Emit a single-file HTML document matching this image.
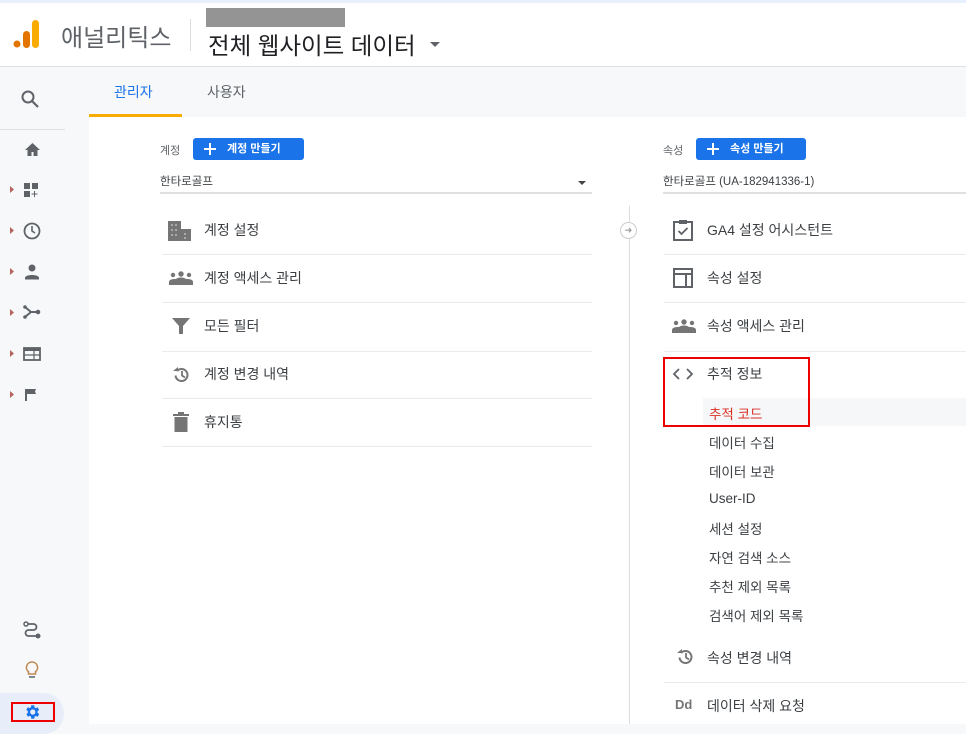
<!DOCTYPE html><html><head><meta charset="utf-8"><style>
*{margin:0;padding:0;box-sizing:border-box}
body{width:966px;height:734px;overflow:hidden;background:#f7f8fa;font-family:"Liberation Sans","Noto Sans CJK KR",sans-serif;color:#3c4043;position:relative}
.a{position:absolute}
.hdr{left:0;top:0;width:966px;height:67px;background:#fff;border-top:3px solid #e8f0fe;border-bottom:1px solid #e0e0e0}
.t{position:absolute;white-space:nowrap}
.item{position:absolute;font-size:14px;color:#3c4043;white-space:nowrap}
.line{position:absolute;height:1px;background:#ebebeb}
.btn{position:absolute;background:#1a73e8;color:#fff;border-radius:3px;font-size:11px;font-weight:bold;height:22px;line-height:22px}
.sub{position:absolute;left:709px;font-size:13.5px;color:#3c4043;white-space:nowrap}
</style></head><body>
<div class="a hdr"></div>
<svg class="a" style="left:12px;top:18px" width="28" height="32"><circle cx="5" cy="26" r="3.5" fill="#e37400"/><rect x="11" y="13" width="7" height="17" rx="3.5" fill="#e37400"/><rect x="20" y="2" width="7" height="28" rx="3.5" fill="#f9ab00"/></svg>
<div class="t" style="left:61px;top:18px;font-size:24px;color:#5f6368">애널리틱스</div>
<div class="a" style="left:190px;top:19px;width:1px;height:32px;background:#dadce0"></div>
<div class="a" style="left:206px;top:8px;width:139px;height:19px;background:#949494"></div>
<div class="t" style="left:208px;top:27px;font-size:23.5px;color:#202124">전체 웹사이트 데이터</div>
<div class="a" style="left:430px;top:42px;border:5px solid transparent;border-top:5px solid #5f6368"></div>
<!-- sidebar -->
<div class="a" style="left:0;top:68px;width:65px;height:666px;background:#f7f8fa"></div>
<svg class="a" style="left:20px;top:89px" width="20" height="20"><circle cx="8" cy="8" r="5.5" fill="none" stroke="#5f6368" stroke-width="2"/><path d="M12 12l6 6" stroke="#5f6368" stroke-width="2.2"/></svg>
<div class="a" style="left:0;top:129px;width:65px;height:1px;background:#e0e0e0"></div>
<svg class="a" style="left:24px;top:142px" width="17" height="15"><path d="M8.5 1L1 8h2.5v6h4v-4h2v4h4V8H16z" fill="#5f6368"/></svg>
<svg class="a" style="left:0;top:180px" width="45" height="230" fill="#5f6368">
<g fill="#b5655d"><path d="M10 6l4 3.5-4 3.5z"/><path d="M10 47l4 3.5-4 3.5z"/><path d="M10 88l4 3.5-4 3.5z"/><path d="M10 129l4 3.5-4 3.5z"/><path d="M10 170l4 3.5-4 3.5z"/><path d="M10 211l4 3.5-4 3.5z"/></g>
<rect x="24" y="3" width="6" height="6"/><rect x="32" y="3" width="6" height="6"/><rect x="24" y="11" width="6" height="6"/><path d="M34 11h1v2.5h2.5v1H35V17h-1v-2.5h-2.5v-1H34z"/>
<circle cx="32" cy="51" r="7.5" fill="none" stroke="#5f6368" stroke-width="1.8"/><path d="M32 46v5l3 2" fill="none" stroke="#5f6368" stroke-width="1.6"/>
<circle cx="32" cy="88" r="3.5"/><path d="M25 98c0-4 14-4 14 0v1.5H25z"/>
<path d="M25 127l6 5-6 5M31 132h7" fill="none" stroke="#5f6368" stroke-width="2"/><circle cx="38" cy="132" r="2.3"/><circle cx="25" cy="127" r="1.8"/><circle cx="25" cy="137" r="1.8"/>
<rect x="24" y="168" width="16" height="12" fill="none" stroke="#5f6368" stroke-width="1.8"/><rect x="24" y="168" width="16" height="3"/><path d="M24 175h16M34 171v9" stroke="#5f6368" stroke-width="1.2"/>
<path d="M25 209h11l-1 2.5 1 2.5h-9v7h-2z"/>
</svg>
<svg class="a" style="left:22px;top:620px" width="20" height="20"><circle cx="4" cy="4" r="2" fill="none" stroke="#5f6368" stroke-width="1.5"/><path d="M5.5 4h6a3 3 0 010 6h-5a3 3 0 000 6h8" fill="none" stroke="#5f6368" stroke-width="1.8"/><circle cx="16" cy="16" r="2.5" fill="#5f6368"/></svg>
<svg class="a" style="left:24px;top:660px" width="16" height="20"><path d="M8 2a5.5 5.5 0 00-3.5 9.8V14h7v-2.2A5.5 5.5 0 008 2z" fill="none" stroke="#c08a55" stroke-width="1.6"/><path d="M5 17h6" stroke="#5f6368" stroke-width="1.5"/></svg>
<div class="a" style="left:0;top:693px;width:64px;height:41px;background:#e8eef9;border-radius:0 20px 20px 0"></div>
<div class="a" style="left:11px;top:702px;width:44px;height:20px;border:2px solid #e00"></div>
<svg class="a" style="left:23px;top:703px" width="18" height="18" viewBox="0 0 24 24"><path fill="#1a73e8" d="M19.4 13a7.5 7.5 0 000-2l2.1-1.6-2-3.5-2.5 1a7 7 0 00-1.7-1L15 3h-4l-.4 2.7a7 7 0 00-1.7 1l-2.5-1-2 3.5L6.6 11a7.5 7.5 0 000 2l-2.1 1.6 2 3.5 2.5-1a7 7 0 001.7 1L11 21h4l.4-2.7a7 7 0 001.7-1l2.5 1 2-3.5zM13 15.5a3.5 3.5 0 110-7 3.5 3.5 0 010 7z"/></svg>
<!-- tabs -->
<div class="t" style="left:114px;top:82px;font-size:14px;color:#1a73e8">관리자</div>
<div class="a" style="left:89px;top:114px;width:93px;height:3px;background:#f9ab00"></div>
<div class="t" style="left:207px;top:82px;font-size:14px;color:#5f6368">사용자</div>
<!-- panel -->
<div class="a" style="left:89px;top:117px;width:877px;height:607px;background:#fff"></div>
<div class="t" style="left:160px;top:142px;font-size:11px;color:#5f6368">계정</div>
<div class="btn" style="left:193px;top:138px;width:111px"><svg class="a" style="left:10px;top:4px" width="14" height="14"><path d="M7 1v12M1 7h12" stroke="#fff" stroke-width="2"/></svg><span style="position:absolute;left:34px">계정 만들기</span></div>
<div class="t" style="left:160px;top:173px;font-size:11.5px;color:#3c4043">한타로골프</div>
<div class="a" style="left:578px;top:181px;border:4px solid transparent;border-top:4px solid #444"></div>
<div class="a" style="left:160px;top:192px;width:432px;height:2px;background:#e0e0e0"></div>
<div class="t" style="left:663px;top:142px;font-size:11px;color:#5f6368">속성</div>
<div class="btn" style="left:696px;top:138px;width:110px"><svg class="a" style="left:10px;top:4px" width="14" height="14"><path d="M7 1v12M1 7h12" stroke="#fff" stroke-width="2"/></svg><span style="position:absolute;left:34px">속성 만들기</span></div>
<div class="t" style="left:663px;top:173px;font-size:11.5px;color:#3c4043">한타로골프 (UA-182941336-1)</div>
<div class="a" style="left:663px;top:192px;width:303px;height:2px;background:#e0e0e0"></div>
<!-- left list -->
<svg class="a" style="left:168px;top:221px" width="24" height="20" fill="#757575"><rect x="0" y="0" width="13" height="20"/><rect x="13" y="8" width="10" height="12"/><g fill="#aaa"><rect x="3" y="3" width="2" height="2"/><rect x="7" y="3" width="2" height="2"/><rect x="3" y="8" width="2" height="2"/><rect x="7" y="8" width="2" height="2"/><rect x="3" y="13" width="2" height="2"/><rect x="7" y="13" width="2" height="2"/><rect x="16" y="12" width="2" height="2"/><rect x="16" y="16" width="2" height="2"/></g></svg>
<div class="item" style="left:204px;top:220px">계정 설정</div>
<div class="line" style="left:162px;top:254px;width:430px"></div>
<svg class="a" style="left:169px;top:271px" width="24" height="14" fill="#757575"><circle cx="4" cy="4" r="2.2"/><circle cx="12" cy="3" r="2.7"/><circle cx="20" cy="4" r="2.2"/><path d="M0 14v-3c0-3 5-3 7-3 1-1 3-1.5 5-1.5s4 .5 5 1.5c2 0 7 0 7 3v3z"/></svg>
<div class="item" style="left:204px;top:268px">계정 액세스 관리</div>
<div class="line" style="left:162px;top:302px;width:430px"></div>
<svg class="a" style="left:172px;top:318px" width="18" height="16" fill="#757575"><path d="M0 0h18l-7 8v8H7V8z"/></svg>
<div class="item" style="left:204px;top:316px">모든 필터</div>
<div class="line" style="left:162px;top:351px;width:430px"></div>
<svg class="a" style="left:172px;top:366px" width="18" height="18"><path d="M3.5 9.5A6 6 0 1 0 5 5" fill="none" stroke="#757575" stroke-width="2"/><path d="M1 5h5V1z" fill="#757575"/><path d="M10 5v4.5l3 2" fill="none" stroke="#757575" stroke-width="1.8"/></svg>
<div class="item" style="left:204px;top:364px">계정 변경 내역</div>
<div class="line" style="left:162px;top:398px;width:430px"></div>
<svg class="a" style="left:173px;top:412px" width="16" height="20" fill="#757575"><rect x="0" y="2" width="16" height="2"/><rect x="5" y="0" width="6" height="2"/><rect x="1.5" y="5" width="13" height="15"/></svg>
<div class="item" style="left:204px;top:412px">휴지통</div>
<div class="line" style="left:162px;top:446px;width:430px"></div>
<!-- divider -->
<div class="a" style="left:629px;top:206px;width:1px;height:518px;background:#ddd"></div>
<div class="a" style="left:620px;top:222px;width:17px;height:17px;border:1px solid #ccc;border-radius:50%;background:#fff;font-size:9px;color:#999;text-align:center;line-height:15px">➜</div>
<!-- right list -->
<svg class="a" style="left:673px;top:219px" width="20" height="22"><rect x="1" y="3" width="18" height="18" fill="none" stroke="#5f6368" stroke-width="2"/><rect x="6" y="1" width="8" height="4" fill="#5f6368"/><path d="M5.5 12l3 3 6-6" fill="none" stroke="#5f6368" stroke-width="1.8"/></svg>
<div class="item" style="left:707px;top:220px">GA4 설정 어시스턴트</div>
<div class="line" style="left:664px;top:254px;width:302px"></div>
<svg class="a" style="left:673px;top:268px" width="20" height="20"><rect x="1" y="1" width="18" height="18" fill="none" stroke="#5f6368" stroke-width="2"/><path d="M1 6h18M13 6v13" stroke="#5f6368" stroke-width="2"/></svg>
<div class="item" style="left:707px;top:268px">속성 설정</div>
<div class="line" style="left:664px;top:302px;width:302px"></div>
<svg class="a" style="left:672px;top:319px" width="24" height="14" fill="#757575"><circle cx="4" cy="4" r="2.2"/><circle cx="12" cy="3" r="2.7"/><circle cx="20" cy="4" r="2.2"/><path d="M0 14v-3c0-3 5-3 7-3 1-1 3-1.5 5-1.5s4 .5 5 1.5c2 0 7 0 7 3v3z"/></svg>
<div class="item" style="left:707px;top:316px">속성 액세스 관리</div>
<div class="line" style="left:664px;top:351px;width:302px"></div>
<svg class="a" style="left:672px;top:367px" width="22" height="14"><path d="M7 2L2 7l5 5M15 2l5 5-5 5" fill="none" stroke="#5f6368" stroke-width="1.8"/></svg>
<div class="item" style="left:707px;top:364px">추적 정보</div>
<div class="a" style="left:703px;top:398px;width:263px;height:28px;background:#f6f7f8"></div>
<div class="sub" style="left:709px;top:403px;color:#d93025">추적 코드</div>
<div class="a" style="left:663px;top:357px;width:147px;height:70px;border:2px solid #e00"></div>
<div class="sub" style="top:432px">데이터 수집</div>
<div class="sub" style="top:461px">데이터 보관</div>
<div class="sub" style="top:491px">User-ID</div>
<div class="sub" style="top:518px">세션 설정</div>
<div class="sub" style="top:547px">자연 검색 소스</div>
<div class="sub" style="top:576px">추천 제외 목록</div>
<div class="sub" style="top:605px">검색어 제외 목록</div>
<svg class="a" style="left:676px;top:648px" width="18" height="18"><path d="M3.5 9.5A6 6 0 1 0 5 5" fill="none" stroke="#757575" stroke-width="2"/><path d="M1 5h5V1z" fill="#757575"/><path d="M10 5v4.5l3 2" fill="none" stroke="#757575" stroke-width="1.8"/></svg>
<div class="item" style="left:707px;top:648px">속성 변경 내역</div>
<div class="line" style="left:664px;top:682px;width:302px"></div>
<div class="t" style="left:675px;top:697px;font-size:13px;font-weight:bold;color:#757575">Dd</div>
<div class="item" style="left:707px;top:696px">데이터 삭제 요청</div>
</body></html>
